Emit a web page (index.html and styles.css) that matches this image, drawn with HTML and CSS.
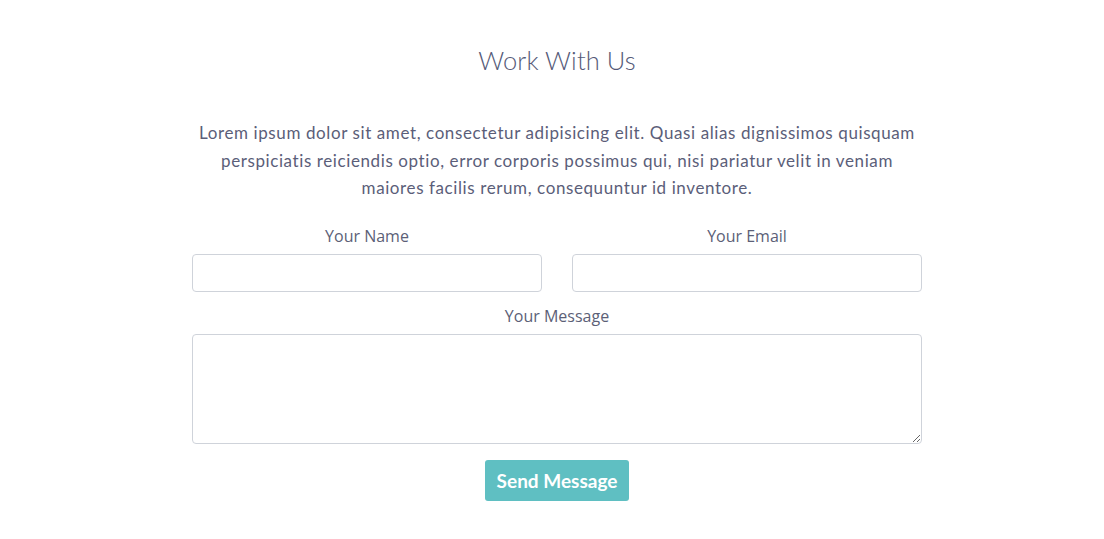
FILE: index.html
```html
<!DOCTYPE html>
<html>
<head>
<meta charset="utf-8">
<link rel="stylesheet" href="styles.css">
</head>
<body>
<section class="work">
  <h2 class="title">Work With Us</h2>
  <p class="intro">Lorem ipsum dolor sit amet, consectetur adipisicing elit. Quasi alias dignissimos quisquam perspiciatis reiciendis optio, error corporis possimus qui, nisi pariatur velit in veniam maiores facilis rerum, consequuntur id inventore.</p>
  <form class="form">
    <div class="row">
      <div class="field">
        <label class="label">Your Name</label>
        <input class="input" type="text">
      </div>
      <div class="field">
        <label class="label">Your Email</label>
        <input class="input" type="email">
      </div>
    </div>
    <div class="field">
      <label class="label">Your Message</label>
      <textarea class="textarea"></textarea>
    </div>
    <div class="actions">
      <button class="btn" type="button">Send Message</button>
    </div>
  </form>
</section>
</body>
</html>
```
FILE: styles.css
```css
* { box-sizing: border-box; }
html, body { margin: 0; padding: 0; background: #fff; }
body { font-family: "Lato", "Open Sans", sans-serif; color: #585c78; }
.work {
  width: 730px;
  margin: 0 0 0 192px;
  padding-top: 43px;
  display: flex;
  flex-direction: column;
  align-items: stretch;
}
.title {
  margin: 0;
  text-align: center;
  font-family: "Lato", sans-serif;
  font-weight: 300;
  font-size: 25.5px;
  line-height: 34px;
  letter-spacing: 0.1px;
  color: #555a78;
}
.intro {
  margin: 42px 0 0;
  text-align: center;
  font-family: "Lato", sans-serif;
  font-size: 17px;
  line-height: 27.5px;
  letter-spacing: 0.6px;
  color: #5b5e79;
  padding: 0;
}
.form {
  margin-top: 23px;
  display: flex;
  flex-direction: column;
  gap: 13px;
}
.row {
  display: flex;
  gap: 30px;
}
.row .field { flex: 1; }
.field {
  display: flex;
  flex-direction: column;
  align-items: stretch;
}
.label {
  text-align: center;
  font-family: "Open Sans", sans-serif;
  font-size: 16px;
  line-height: 22px;
  color: #5c5f77;
  margin-bottom: 7px;
}
.input {
  height: 38px;
  border: 1px solid #cfd3da;
  border-radius: 4px;
  background: #fff;
  font: inherit;
  padding: 6px 12px;
}
.textarea {
  height: 110px;
  border: 1px solid #cfd3da;
  border-radius: 4px;
  background: #fff;
  resize: vertical;
  font: inherit;
  padding: 6px 12px;
}
.actions {
  display: flex;
  justify-content: center;
  margin-top: 3px;
}
.btn {
  width: 144px;
  height: 41px;
  border: none;
  border-radius: 3px;
  background: #5fbfc2;
  color: #fff;
  font-family: "Lato", sans-serif;
  font-weight: 700;
  font-size: 19px;
  line-height: 39px;
  padding: 0;
}
```
